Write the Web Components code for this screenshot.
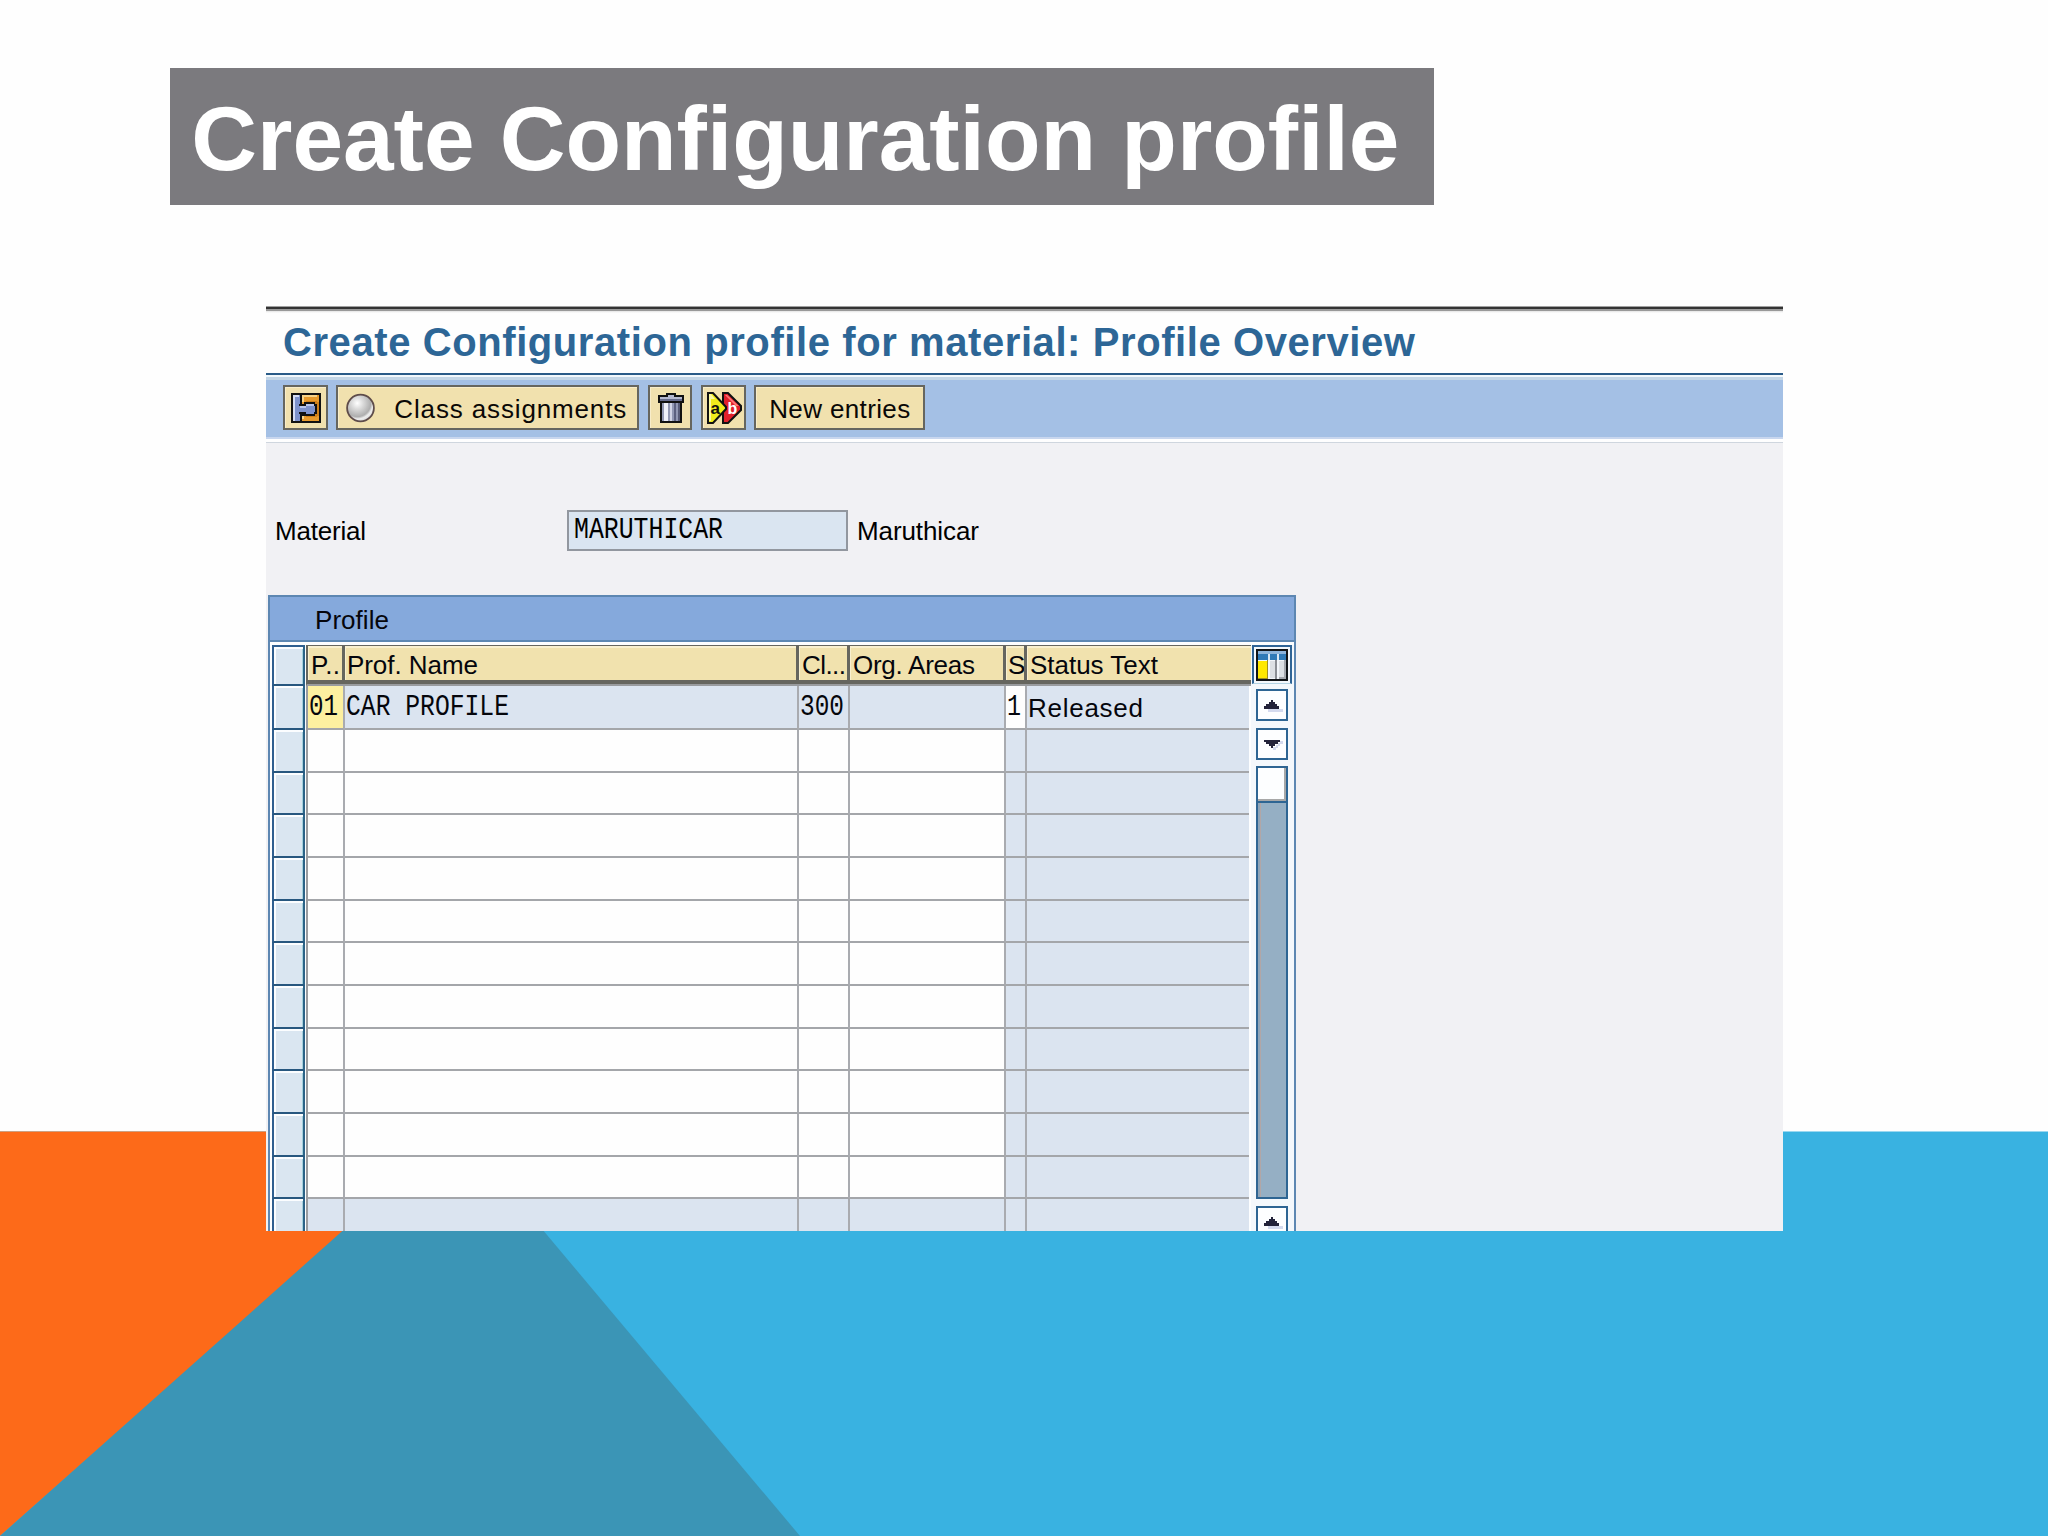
<!DOCTYPE html>
<html lang="en">
<head>
<meta charset="utf-8">
<title>Create Configuration profile</title>
<style>
  html, body {
    margin: 0;
    width: 2048px;
    height: 1536px;
    overflow: hidden;
    background: #fefefe;
    font-family: "Liberation Sans", Arial, sans-serif;
  }
</style>
</head>
<body>
<config-slide></config-slide>

<script>
// Text run stretched to a given width, by tracking or (mode="scale") horizontally
class FitText extends HTMLElement {
  constructor() {
    super();
    this.attachShadow({ mode: 'open' });
    this.shadowRoot.innerHTML = `
      <style>
        :host { display: block; line-height: 1; flex: none; }
        span { display: block; width: max-content; white-space: pre; transform-origin: 0 50%; }
      </style>
      <span><slot></slot></span>
    `;
  }

  connectedCallback() {
    const span = this.shadowRoot.querySelector('span');
    const target = Number(this.getAttribute('width'));
    this.style.width = `${target}px`;
    const natural = span.getBoundingClientRect().width;
    if (this.getAttribute('mode') === 'scale') {
      span.style.transform = `scaleX(${target / natural})`;
    } else {
      const gaps = Math.max(this.textContent.length - 1, 1);
      span.style.letterSpacing = `${(target - natural) / gaps}px`;
    }
  }
}

const ICONS = {
  puzzle: `
    <svg width="30" height="30" viewBox="0 0 16 16" shape-rendering="crispEdges">
      <rect width="16" height="16" fill="#111"/>
      <rect x="1" y="1" width="4" height="14" fill="#7d92cc"/>
      <rect x="1" y="1" width="1" height="14" fill="#d4dcf4"/>
      <rect x="2" y="1" width="2" height="1" fill="#d4dcf4"/>
      <path d="M6 1h9v14H6v-3h2v1h5v-1h1V5h-1V4H9v1H8v1H6z" fill="#e79a2c"/>
      <path d="M6 1h8v1H7v3H6zM6 12h1v2H6z" fill="#f8d488"/>
      <path d="M8 4h6v1h1v7h-1v1H8z" fill="#d08018"/>
      <path d="M4 6h3V5h6v1h1v5h-1v1H7v-1H4z" fill="#111"/>
      <path d="M3 7h5V6h4v1h1v3h-1v1H8v-1H3z" fill="#7d92cc"/>
      <path d="M8 6h4v1H8zM5 7h3v1H5z" fill="#b9c6ec"/>
    </svg>`,
  sphere: `
    <svg width="30" height="30" viewBox="0 0 30 30">
      <defs>
        <radialGradient id="g" cx=".38" cy=".32" r=".7">
          <stop offset="0" stop-color="#fff"/>
          <stop offset=".3" stop-color="#dcdcdc"/>
          <stop offset=".72" stop-color="#aeaeae"/>
          <stop offset=".84" stop-color="#eee"/>
          <stop offset="1" stop-color="#d8d8d8"/>
        </radialGradient>
      </defs>
      <circle cx="15.5" cy="15" r="13.4" fill="url(#g)" stroke="#5e4c4a" stroke-width="1.8"/>
    </svg>`,
  trash: `
    <svg width="26" height="30" viewBox="0 0 13 15" shape-rendering="crispEdges">
      <path d="M4 0h5v1h4v4h-1v10H1V5H0V1h4z" fill="#111"/>
      <path d="M5 1h3v1H5zM1 2h11v1H1z" fill="#b4b8d0"/>
      <path d="M1 3h11v1H1z" fill="#646a8c"/>
      <path d="M2 5h9v9H2z" fill="#9298b4"/>
      <path d="M3 5h2v9H3z" fill="#eef0fa"/>
      <path d="M6 5h1v9H6z" fill="#d2d5e6"/>
      <path d="M8 5h1v9H8z" fill="#5c6180"/>
      <path d="M10 5h1v9h-1z" fill="#585c78"/>
    </svg>`,
  swap: `
    <svg width="35" height="32" viewBox="0 0 35 32">
      <path d="M16 1h5l13 13v4L21 31h-5z" fill="#e0202c" stroke="#111" stroke-width="2"/>
      <path d="M18 3h2l12 11h-3z" fill="#f77"/>
      <path d="M1 1h5l13 14v2L6 31H1z" fill="#f1ec1c" stroke="#111" stroke-width="2"/>
      <path d="M2 2h2l4 5H4v22H2z" fill="#fbf9a0"/>
      <text x="3.5" y="22" font-family="Liberation Sans, sans-serif" font-size="17" font-weight="700" fill="#111">a</text>
      <text x="20.5" y="21.5" font-family="Liberation Sans, sans-serif" font-size="16" font-weight="700" fill="#fff">b</text>
    </svg>`,
  columns: `
    <svg width="32" height="32" viewBox="0 0 32 32" shape-rendering="crispEdges">
      <rect width="32" height="32" fill="#101418"/>
      <rect x="2" y="2" width="28" height="28" fill="#f2f6fa"/>
      <rect x="2" y="2" width="28" height="9" fill="#2f7ab8"/>
      <rect x="2" y="2" width="28" height="3" fill="#8cb4dc"/>
      <path d="M12 5h2v6h-2zM21 5h2v6h-2z" fill="#d8e8f6"/>
      <rect x="2" y="12" width="9" height="17" fill="#ffe800"/>
      <path d="M11 11h1v19H2v-1h9z" fill="#a09020"/>
      <rect x="14" y="12" width="5" height="17" fill="#dce0e4"/>
      <rect x="19" y="11" width="2" height="19" fill="#8a8e94"/>
      <rect x="23" y="12" width="5" height="17" fill="#dce0e4"/>
      <path d="M28 11h2v19h-7v-2h5z" fill="#a4a8ae"/>
    </svg>`,
  up: `
    <svg width="20" height="14" viewBox="0 0 20 14" shape-rendering="crispEdges">
      <path d="M4 10h15v3H4z" fill="#d4daee"/>
      <path d="M7 1h2v2h2v2h2v2h2v3H0V7h2V5h3V3h2z" fill="#23233a"/>
    </svg>`,
  down: `
    <svg width="20" height="14" viewBox="0 0 20 14" shape-rendering="crispEdges">
      <path d="M16 3h3v3h-3v2h-2v2h-2v2H9V9h3V7h2V5h2z" fill="#d4daee"/>
      <path d="M0 2h16v2h-2v2h-3v2H9v2H7V8H5V6H2V4H0z" fill="#23233a"/>
    </svg>`
};

class SapIcon extends HTMLElement {
  connectedCallback() {
    this.attachShadow({ mode: 'open' }).innerHTML = `
      <style>
        :host { display: block; flex: none; line-height: 0; }
        svg { display: block; }
      </style>
      ${ICONS[this.getAttribute('name')]}
    `;
  }
}

class ToolButton extends HTMLElement {
  connectedCallback() {
    this.attachShadow({ mode: 'open' }).innerHTML = `
      <style>
        :host {
          display: flex;
          align-items: center;
          box-sizing: border-box;
          height: 45px;
          border: 2px solid #66665f;
          background: #f1e1ae;
          box-shadow: inset 1px 1px 0 #f8edca;
          font-size: 26px;
          color: #0a0806;
        }
      </style>
      <slot></slot>
    `;
  }
}

class SlideBackdrop extends HTMLElement {
  connectedCallback() {
    this.attachShadow({ mode: 'open' }).innerHTML = `
      <style>
        :host { display: block; width: 2048px; height: 1536px; }
        svg { display: block; }
      </style>
      <svg width="2048" height="1536" viewBox="0 0 2048 1536">
        <path d="M0 1131.5h2048V1536H0z" fill="#39b2e1"/>
        <path d="M0 1131.5h457L0 1536z" fill="#fd6a19"/>
        <path d="M0 1536L454 1131.5H460L800 1536z" fill="#3b95b6"/>
      </svg>
    `;
  }
}

class SlideTitle extends HTMLElement {
  connectedCallback() {
    this.attachShadow({ mode: 'open' }).innerHTML = `
      <style>
        :host {
          display: flex;
          align-items: center;
          box-sizing: border-box;
          width: 1263.5px;
          height: 136.7px;
          padding: 5px 0 0 21px;
          background: #7b7a7e;
          color: #fff;
          font-size: 91px;
          font-weight: 700;
        }
      </style>
      <slot></slot>
    `;
  }
}

class ScrollColumn extends HTMLElement {
  connectedCallback() {
    this.attachShadow({ mode: 'open' }).innerHTML = `
      <style>
        :host {
          display: flex;
          flex-direction: column;
          width: 43px;
          background: #f4f8fc;
        }
        .config {
          box-sizing: border-box;
          width: 40px;
          height: 39px;
          margin-left: 1px;
          padding: 2px 0 0 2px;
          border: 2px solid #2f6496;
          border-bottom: 1px solid #b4d4e4;
        }
        .btn, .thumb, .track {
          box-sizing: border-box;
          width: 32px;
          margin-left: 5px;
          border: 2px solid #2e6593;
          background: #fdfeff;
        }
        .btn {
          display: flex;
          height: 32px;
          padding: 8px 0 0 6px;
          flex: none;
        }
        .first { margin-top: 5px; }
        .second { margin-top: 7px; }
        .thumb {
          height: 35px;
          margin-top: 6px;
          border-bottom: 0;
          box-shadow: inset -2px -2px 0 #a8a8a8;
        }
        .track {
          height: 398px;
          background: #95afc4;
          box-shadow: inset 2px 0 0 #8ea4b8, inset 3px 0 0 #b2a6a6;
        }
        .last { margin-top: 7px; }
      </style>
      <div class="config"><sap-icon name="columns"></sap-icon></div>
      <div class="btn first"><sap-icon name="up"></sap-icon></div>
      <div class="btn second"><sap-icon name="down"></sap-icon></div>
      <div class="thumb"></div>
      <div class="track"></div>
      <div class="btn last"><sap-icon name="up"></sap-icon></div>
    `;
  }
}

class ProfileTable extends HTMLElement {
  constructor() {
    super();
    this.attachShadow({ mode: 'open' });
    this._headers = [
      { label: 'P..', width: 29, pad: 3 },
      { label: 'Prof. Name', width: 131, pad: 2 },
      { label: 'Cl...', width: 44, pad: 3 },
      { label: 'Org. Areas', width: 122, pad: 3 },
      { label: 'S', width: 16, pad: 2 },
      { label: 'Status Text', width: 128, pad: 3 }
    ];
    this._row = [
      { label: '01', width: 29, mono: true },
      { label: 'CAR PROFILE', width: 163, mono: true },
      { label: '300', width: 44, mono: true },
      { label: '' },
      { label: '1', width: 14, mono: true },
      { label: 'Released', width: 115 }
    ];
  }

  connectedCallback() {
    const head = this._headers.map(h =>
      `<div class="h" style="padding-left:${h.pad}px"><fit-text width="${h.width}">${h.label}</fit-text></div>`
    ).join('');

    const first = this._row.map(c => {
      if (!c.label) return '<div class="c"></div>';
      return c.mono
        ? `<div class="c mono"><fit-text mode="scale" width="${c.width}">${c.label}</fit-text></div>`
        : `<div class="c sans"><fit-text width="${c.width}">${c.label}</fit-text></div>`;
    }).join('');

    const empty = '<div class="c"></div>'.repeat(6);
    const rows = `<div class="row">${empty}</div>`.repeat(11);

    this.shadowRoot.innerHTML = `
      <style>
        :host {
          display: block;
          box-sizing: border-box;
          width: 1028px;
          height: 640px;
          border: 2px solid #5d87b2;
          border-bottom: 0;
          background: #fdfeff;
          font-size: 26px;
          color: #05060c;
          overflow: hidden;
        }
        .caption {
          display: flex;
          align-items: center;
          box-sizing: border-box;
          height: 45px;
          padding: 3px 0 0 45px;
          background: #85a9dc;
          border-bottom: 2px solid #5d87b2;
        }
        .body {
          display: grid;
          grid-template-columns: 35px 946px 43px;
          padding-top: 3px;
        }
        .picks { padding-left: 2px; }
        .pick {
          box-sizing: border-box;
          height: 42.7px;
          border-left: 2px solid #2f5f90;
          border-right: 2px solid #2c6388;
          border-bottom: 2px solid #27577f;
          background: #dae6f1;
          box-shadow: inset 2px 2px 0 #fbfdff, inset -1px 0 0 #a4d0dc;
        }
        .pick.top { height: 41px; border-top: 2px solid #2f5f90; }
        .pick.one { height: 43.5px; }
        .head, .row {
          display: grid;
          grid-template-columns: 37px 454px 51px 156px 21px 222px;
          grid-template-rows: 100%;
          margin-left: 3px;
        }
        .head {
          grid-template-columns: 37px 454px 51px 156px 21px 224px;
          box-sizing: border-box;
          height: 41px;
          margin-left: 1px;
          padding-left: 1px;
          border-left: 1px solid #66665f;
          border-bottom: 2px solid #999b9e;
          background: #66665f;
        }
        .h {
          display: flex;
          align-items: center;
          box-sizing: border-box;
          height: 34px;
          margin: 1px 3px 0 0;
          padding-top: 3px;
          background: #f1e2ae;
          box-shadow: inset 1px 2px 0 #f9f0cf;
          overflow: hidden;
        }
        .h:last-child { margin-right: 0; }
        .row { height: 42.7px; }
        .row.first { height: 43.5px; }
        .c {
          display: flex;
          align-items: center;
          box-sizing: border-box;
          border-right: 2px solid #a9abb0;
          border-bottom: 2px solid #a4a6aa;
          background: #fefefe;
        }
        .c:first-child { box-shadow: -2px 0 0 #9a9ca0; }
        .c:last-child { border-right: 0; }
        .c:nth-child(n+5), .row:last-child .c, .first .c { background: #dbe4f0; }
        .first .c:first-child { background: #fdf0a0; }
        .first .c:nth-child(5) { background: #fefefe; }
        .mono {
          padding-left: 1px;
          font-family: "Liberation Mono", monospace;
          font-size: 29px;
        }
        .sans { padding: 2px 0 0 1px; }
      </style>
      <div class="caption"><fit-text width="74">Profile</fit-text></div>
      <div class="body">
        <div class="picks">
          <div class="pick top"></div>
          <div class="pick one"></div>
          ${'<div class="pick"></div>'.repeat(12)}
        </div>
        <div>
          <div class="head">${head}</div>
          <div class="row first">${first}</div>
          ${rows}
          <div class="row">${empty}</div>
        </div>
        <scroll-column></scroll-column>
      </div>
    `;
  }
}

class SapWindow extends HTMLElement {
  connectedCallback() {
    this.attachShadow({ mode: 'open' }).innerHTML = `
      <style>
        :host {
          display: flex;
          flex-direction: column;
          width: 1516.7px;
          height: 925.3px;
          background: #f1f1f4;
          overflow: hidden;
        }
        .title, .tools, .material { flex: none; }
        .title {
          display: flex;
          align-items: center;
          box-sizing: border-box;
          height: 67px;
          padding: 5px 0 0 17px;
          background: linear-gradient(#a0a0a0 0, #a0a0a0 1px, #333 1px, #333 3px, #999 3px, #999 5px, #e4e4e4 5px, #fefefe 7px);
          color: #2d6696;
          font-size: 40px;
          font-weight: 700;
        }
        .tools {
          display: flex;
          gap: 8.5px;
          box-sizing: border-box;
          height: 70px;
          padding: 12.3px 0 0 16.8px;
          background: linear-gradient(#2a5b88 0, #2a5b88 2px, #f2f8fc 2px, #f2f8fc 4px, #c4d6e6 4px, #c4d6e6 7px, #a4c0e5 7px, #a4c0e5 64px, #c8d6ee 64px, #c8d6ee 66px, #fefefe 66px, #fefefe 69px, #cfd6de 69px);
        }
        .b1 { width: 45px; padding-left: 6px; }
        .b2 { width: 303px; padding-left: 7px; gap: 19px; }
        .b3 { width: 44.4px; padding-left: 8px; }
        .b4 { width: 45px; padding-left: 4px; }
        .b5 { width: 170.6px; padding-left: 13px; }
        .b2 fit-text, .b5 fit-text { padding-top: 2px; }
        .material {
          display: flex;
          align-items: center;
          height: 41px;
          margin: 67px 0 44.4px;
          padding-left: 9px;
          font-size: 26px;
          color: #000;
        }
        .material fit-text { padding-top: 2px; }
        .field {
          display: flex;
          align-items: center;
          box-sizing: border-box;
          width: 281px;
          height: 41px;
          margin: 0 9px 0 201px;
          padding-left: 5px;
          border: 2px solid #92979f;
          background: #dae5f1;
          font-family: "Liberation Mono", monospace;
          font-size: 29px;
        }
        .material .field fit-text { padding: 0; }
        profile-table { margin-left: 2px; flex: none; }
      </style>
      <div class="title"><fit-text width="1132">Create Configuration profile for material: Profile Overview</fit-text></div>
      <div class="tools">
        <tool-button class="b1"><sap-icon name="puzzle"></sap-icon></tool-button>
        <tool-button class="b2"><sap-icon name="sphere"></sap-icon><fit-text width="232">Class assignments</fit-text></tool-button>
        <tool-button class="b3"><sap-icon name="trash"></sap-icon></tool-button>
        <tool-button class="b4"><sap-icon name="swap"></sap-icon></tool-button>
        <tool-button class="b5"><fit-text width="141">New entries</fit-text></tool-button>
      </div>
      <div class="material">
        <fit-text width="91">Material</fit-text>
        <div class="field"><fit-text mode="scale" width="149">MARUTHICAR</fit-text></div>
        <fit-text width="122">Maruthicar</fit-text>
      </div>
      <profile-table></profile-table>
    `;
  }
}

class ConfigSlide extends HTMLElement {
  connectedCallback() {
    this.attachShadow({ mode: 'open' }).innerHTML = `
      <style>
        :host { display: grid; width: 2048px; height: 1536px; }
        slide-backdrop, .content { grid-area: 1 / 1; }
        .content {
          display: flex;
          flex-direction: column;
          align-items: flex-start;
          gap: 101.3px;
          padding: 68px 0 0 170.3px;
        }
        sap-window { margin-left: 95.7px; }
      </style>
      <slide-backdrop></slide-backdrop>
      <div class="content">
        <slide-title><fit-text width="1208">Create Configuration profile</fit-text></slide-title>
        <sap-window></sap-window>
      </div>
    `;
  }
}

customElements.define('fit-text', FitText);
customElements.define('sap-icon', SapIcon);
customElements.define('tool-button', ToolButton);
customElements.define('slide-backdrop', SlideBackdrop);
customElements.define('slide-title', SlideTitle);
customElements.define('scroll-column', ScrollColumn);
customElements.define('profile-table', ProfileTable);
customElements.define('sap-window', SapWindow);
customElements.define('config-slide', ConfigSlide);
</script>
</body>
</html>
